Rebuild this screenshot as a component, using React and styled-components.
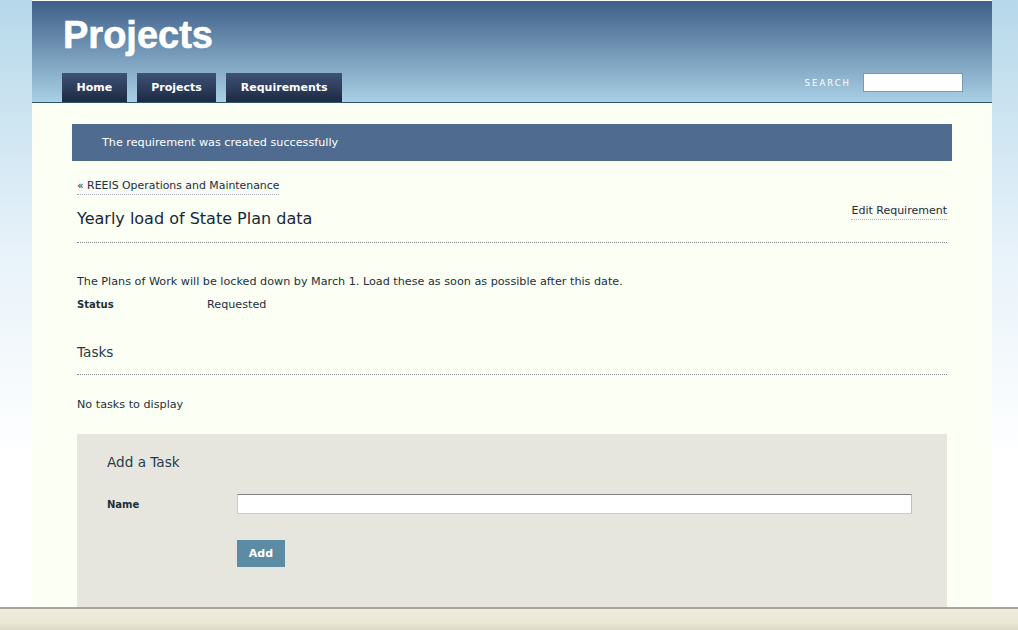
import React from 'react';
import styled, { createGlobalStyle } from 'styled-components';

const GlobalStyle = createGlobalStyle`
    html, body {
        margin: 0;
        padding: 0;
    }
    body {
        background: linear-gradient(#b6d8ea 0px, #e9f3fa 260px, #ffffff 460px) no-repeat #ffffff;
        min-height: 630px;
        font-family: "DejaVu Sans", Verdana, sans-serif;
        color: #1d2f3c;
    }
`;

export default function App() {
    const navItems = ['Home', 'Projects', 'Requirements'];

    return (
        <>
            <GlobalStyle />
            <Container>
                {/* header with title, tabs and search */}
                <Header>
                    <SiteTitle>Projects</SiteTitle>
                    <NavBar>
                        <Tabs>
                            {navItems.map((item) => (
                                <Tab key={item} href="#">{item}</Tab>
                            ))}
                        </Tabs>
                        <SearchBox>
                            <SearchLabel>Search</SearchLabel>
                            <SearchInput type="text" />
                        </SearchBox>
                    </NavBar>
                </Header>

                <Flash>The requirement was created successfully</Flash>

                <Content>
                    <Breadcrumb href="#">« REEIS Operations and Maintenance</Breadcrumb>

                    <TitleRow>
                        <PageTitle>Yearly load of State Plan data</PageTitle>
                        <EditLink href="#">Edit Requirement</EditLink>
                    </TitleRow>

                    <Description>
                        The Plans of Work will be locked down by March 1. Load these as soon as possible after this date.
                    </Description>
                    <FieldRow>
                        <FieldLabel>Status</FieldLabel>
                        <FieldValue>Requested</FieldValue>
                    </FieldRow>

                    <SectionTitle>Tasks</SectionTitle>
                    <EmptyText>No tasks to display</EmptyText>

                    <TaskForm>
                        <FormTitle>Add a Task</FormTitle>
                        <FormRow>
                            <FormLabel>Name</FormLabel>
                            <NameInput type="text" />
                        </FormRow>
                        <FormActions>
                            <AddButton type="button">Add</AddButton>
                        </FormActions>
                    </TaskForm>
                </Content>
            </Container>
            <StatusBar />
        </>
    );
}

/* ---------------- styles ---------------- */

const Container = styled.div`
    width: 960px;
    margin-left: 32px;
    padding-top: 1px;
    background: #fcfff4;
    min-height: 629px;
    box-sizing: border-box;
`;

const Header = styled.div`
    height: 101px;
    background: linear-gradient(#3e5f88, #a9d0e5);
    border-bottom: 1px solid #2f5868;
    display: flex;
    flex-direction: column;
    justify-content: space-between;
    padding: 0 30px 0 30px;
`;

const SiteTitle = styled.h1`
    margin: 12px 0 0 1px;
    font-family: "Liberation Sans", Arial, sans-serif;
    font-weight: bold;
    font-size: 38px;
    line-height: 44px;
    letter-spacing: 0px;
    color: #ffffff;
    -webkit-text-stroke: 0.6px #ffffff;
`;

const NavBar = styled.div`
    display: flex;
    justify-content: space-between;
    align-items: flex-start;
`;

const Tabs = styled.div`
    display: flex;
    gap: 10px;
`;

const Tab = styled.a`
    display: block;
    height: 29px;
    line-height: 29px;
    padding: 0 14.5px;
    background: linear-gradient(#3e5276, #1d2943);
    color: #ffffff;
    font-family: "DejaVu Sans", Tahoma, sans-serif;
    font-weight: bold;
    font-size: 11px;
    text-decoration: none;
`;

const SearchBox = styled.div`
    display: flex;
    align-items: center;
    gap: 12px;
`;

const SearchLabel = styled.span`
    font-size: 8.5px;
    letter-spacing: 2px;
    text-transform: uppercase;
    color: #ffffff;
    margin-top: 1px;
`;

const SearchInput = styled.input`
    width: 98px;
    height: 17px;
    padding: 0;
    border: 1px solid #7a9bb6;
    background: #ffffff;
    margin-right: -1px;
`;

const Flash = styled.div`
    margin: 21px 40px 0 40px;
    height: 37px;
    line-height: 37px;
    padding-left: 30px;
    background: #4f6b8f;
    color: #ffffff;
    font-size: 11.2px;
`;

const Content = styled.div`
    padding: 13px 45px 0 45px;
`;

const Breadcrumb = styled.a`
    display: inline-block;
    font-size: 10.9px;
    line-height: 14px;
    color: #1d2f3c;
    text-decoration: none;
    border-bottom: 1px dotted #a8a8b8;
    background: #f8faf3;
    padding-bottom: 1px;
`;

const TitleRow = styled.div`
    display: flex;
    justify-content: space-between;
    align-items: flex-start;
    border-bottom: 1px dotted #888888;
    padding: 9px 0 13px 0;
`;

const PageTitle = styled.h2`
    margin: 5px 0 0 0;
    font-size: 16px;
    font-weight: normal;
    line-height: 20px;
    color: #16293a;
`;

const EditLink = styled.a`
    font-size: 11px;
    line-height: 14px;
    color: #1d2f3c;
    text-decoration: none;
    border-bottom: 1px dotted #b0b0c0;
    background: #f8faf3;
    padding-bottom: 1px;
`;

const Description = styled.p`
    margin: 31px 0 0 0;
    font-size: 11.2px;
    line-height: 15px;
    color: #1d2f3c;
`;

const FieldRow = styled.div`
    display: flex;
    margin-top: 8px;
    font-size: 11.2px;
    line-height: 15px;
`;

const FieldLabel = styled.span`
    width: 130px;
    font-weight: bold;
    font-size: 10px;
`;

const FieldValue = styled.span``;

const SectionTitle = styled.h3`
    margin: 31px 0 0 0;
    padding-bottom: 13px;
    border-bottom: 1px dotted #888888;
    font-size: 13.6px;
    font-weight: normal;
    line-height: 18px;
    color: #273a4a;
`;

const EmptyText = styled.p`
    margin: 22px 0 0 0;
    font-size: 11.2px;
    line-height: 15px;
`;

const TaskForm = styled.div`
    margin-top: 22px;
    background: #e6e6df;
    padding: 19px 35px 60px 30px;
`;

const FormTitle = styled.h4`
    margin: 0;
    font-size: 13.6px;
    font-weight: normal;
    line-height: 18px;
    color: #273a4a;
`;

const FormRow = styled.div`
    display: flex;
    align-items: center;
    margin-top: 23px;
`;

const FormLabel = styled.label`
    width: 130px;
    font-size: 10px;
    font-weight: bold;
    color: #1d2f3c;
`;

const NameInput = styled.input`
    flex: 1;
    height: 16px;
    padding: 1px;
    border: 1px solid #cccccc;
    border-top: 1px solid #808080;
    border-right-color: #c0c0c0;
    background: #ffffff;
`;

const FormActions = styled.div`
    padding-left: 130px;
    margin-top: 26px;
`;

const AddButton = styled.button`
    width: 48px;
    height: 27px;
    border: none;
    background: #5b8ca4;
    color: #ffffff;
    font-family: "DejaVu Sans", Tahoma, sans-serif;
    font-weight: bold;
    font-size: 11px;
    cursor: pointer;
    padding: 0;
`;

const StatusBar = styled.div`
    position: fixed;
    left: 0;
    right: 0;
    bottom: 0;
    height: 21px;
    border-top: 2px solid #a8a69c;
    background: linear-gradient(#f0ecdc, #ebe7d6 70%, #dcd8c6);
`;
